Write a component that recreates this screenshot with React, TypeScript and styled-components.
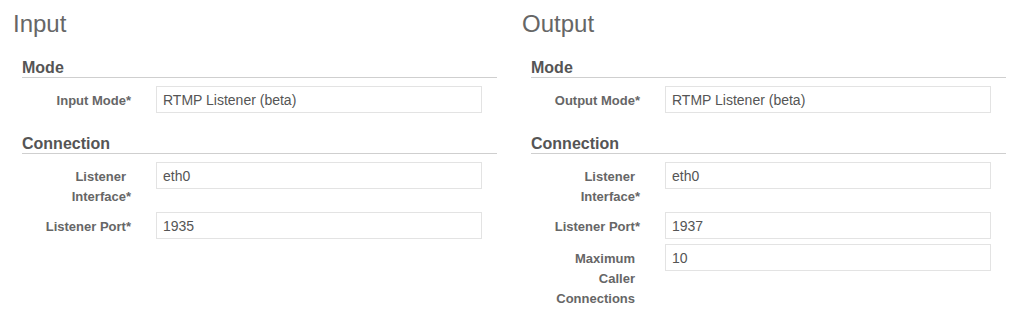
import React from "react";
import styled, { createGlobalStyle } from "styled-components";

const GlobalStyle = createGlobalStyle`
  html, body {
    margin: 0;
    padding: 0;
    background: #ffffff;
    overflow: hidden;
  }
  body {
    font-family: "Liberation Sans", Arial, sans-serif;
    color: #555555;
  }
`;

const Page = styled.div`
  display: grid;
  grid-template-columns: 509px 1fr;
  padding-left: 13px;
  padding-top: 10px;
`;

const Column = styled.div`
  display: flex;
  flex-direction: column;
`;

const Heading = styled.h2`
  margin: 0 0 21px 0;
  font-size: 24px;
  line-height: 27px;
  font-weight: normal;
  color: #666666;
`;

const Section = styled.fieldset`
  margin: 0 0 0 9px;
  padding: 0;
  border: none;
  width: 475px;
  & + & {
    margin-top: 16px;
  }
`;

const Legend = styled.div`
  font-size: 16px;
  line-height: 19px;
  font-weight: bold;
  color: #555555;
  border-bottom: 1px solid #cfcfcf;
  margin-bottom: 8px;
`;

const Row = styled.div`
  display: flex;
  align-items: flex-start;
  margin-bottom: 5px;
`;

const Label = styled.label`
  box-sizing: border-box;
  width: 92px;
  margin-left: 12px;
  margin-right: 30px;
  padding-top: 5px;
  text-align: right;
  font-size: 13px;
  line-height: 20px;
  font-weight: bold;
  color: #666666;
`;

const Req = styled.span`
  margin-right: -5px;
`;

const Field = styled.input`
  box-sizing: border-box;
  width: 326px;
  height: 27px;
  margin: 0;
  padding: 1px 6px 0 6px;
  border: 1px solid #e3e3e3;
  border-radius: 0;
  background: #ffffff;
  font-family: "Liberation Sans", Arial, sans-serif;
  font-size: 14px;
  color: #555555;
  outline: none;
`;

type FieldDef = { label: string; value: string; required?: boolean };
type SectionDef = { title: string; fields: FieldDef[] };

const FormSection: React.FC<SectionDef> = ({ title, fields }) => (
  <Section>
    <Legend>{title}</Legend>
    {fields.map((f) => (
      <Row key={f.label}>
        <Label>
          {f.label}
          {f.required && <Req>*</Req>}
        </Label>
        <Field type="text" defaultValue={f.value} readOnly />
      </Row>
    ))}
  </Section>
);

const columns: { title: string; sections: SectionDef[] }[] = [
  {
    title: "Input",
    sections: [
      {
        title: "Mode",
        fields: [{ label: "Input Mode", value: "RTMP Listener (beta)", required: true }],
      },
      {
        title: "Connection",
        fields: [
          { label: "Listener Interface", value: "eth0", required: true },
          { label: "Listener Port", value: "1935", required: true },
        ],
      },
    ],
  },
  {
    title: "Output",
    sections: [
      {
        title: "Mode",
        fields: [{ label: "Output Mode", value: "RTMP Listener (beta)", required: true }],
      },
      {
        title: "Connection",
        fields: [
          { label: "Listener Interface", value: "eth0", required: true },
          { label: "Listener Port", value: "1937", required: true },
          { label: "Maximum Caller Connections", value: "10" },
        ],
      },
    ],
  },
];

export default function App() {
  return (
    <>
      <GlobalStyle />
      <Page>
        {columns.map((c) => (
          <Column key={c.title}>
            <Heading>{c.title}</Heading>
            {c.sections.map((s) => (
              <FormSection key={s.title} {...s} />
            ))}
          </Column>
        ))}
      </Page>
    </>
  );
}
